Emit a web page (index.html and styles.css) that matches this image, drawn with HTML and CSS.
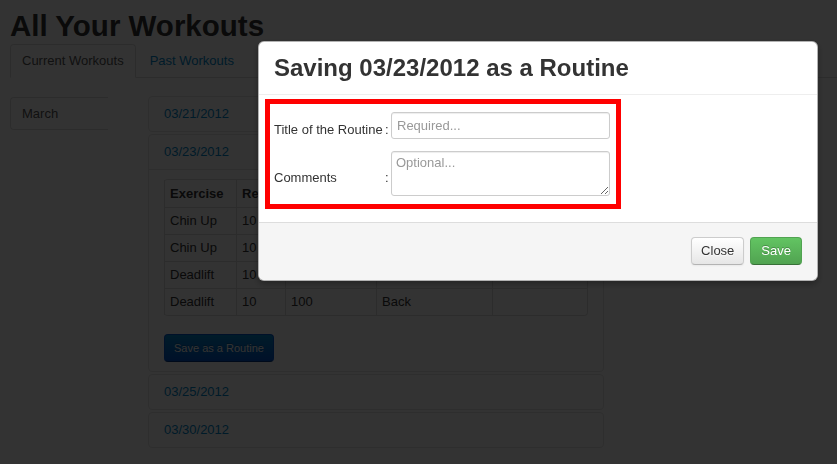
FILE: index.html
```html
<!DOCTYPE html>
<html>
<head>
<meta charset="utf-8">
<title>All Your Workouts</title>
<link rel="stylesheet" href="styles.css">
</head>
<body>
<div class="page">
  <h1 class="page-title">All Your Workouts</h1>
  <ul class="tabs">
    <li class="tab active"><a>Current Workouts</a></li>
    <li class="tab"><a>Past Workouts</a></li>
  </ul>
  <div class="layout">
    <ul class="side-nav">
      <li class="side-item"><a>March</a></li>
    </ul>
    <div class="accordion">
      <div class="group">
        <div class="group-head"><a>03/21/2012</a></div>
      </div>
      <div class="group">
        <div class="group-head"><a>03/23/2012</a></div>
        <div class="group-body">
          <table class="workout">
            <thead>
              <tr><th class="c1">Exercise</th><th class="c2">Reps</th><th class="c3">Weight</th><th class="c4">Muscle Group</th><th class="c5">Notes</th></tr>
            </thead>
            <tbody>
              <tr><td>Chin Up</td><td>10</td><td>0</td><td>Back</td><td></td></tr>
              <tr><td>Chin Up</td><td>10</td><td>0</td><td>Back</td><td></td></tr>
              <tr><td>Deadlift</td><td>10</td><td>100</td><td>Back</td><td></td></tr>
              <tr><td>Deadlift</td><td>10</td><td>100</td><td>Back</td><td></td></tr>
            </tbody>
          </table>
          <button class="btn-primary-small">Save as a Routine</button>
        </div>
      </div>
      <div class="group">
        <div class="group-head"><a>03/25/2012</a></div>
      </div>
      <div class="group">
        <div class="group-head"><a>03/30/2012</a></div>
      </div>
    </div>
  </div>
</div>

<div class="backdrop"></div>

<div class="modal">
  <div class="modal-header">
    <h3 class="modal-title">Saving 03/23/2012 as a Routine</h3>
  </div>
  <div class="modal-body">
    <div class="highlight">
      <div class="form-grid">
        <label class="f-label">Title of the Routine</label>
        <span class="f-colon">:</span>
        <input class="f-input" type="text" placeholder="Required...">
        <label class="f-label">Comments</label>
        <span class="f-colon">:</span>
        <textarea class="f-textarea" placeholder="Optional..."></textarea>
      </div>
    </div>
  </div>
  <div class="modal-footer">
    <button class="btn btn-default">Close</button>
    <button class="btn btn-success">Save</button>
  </div>
</div>
</body>
</html>
```

FILE: styles.css
```css
* { box-sizing: border-box; }

html, body {
  margin: 0;
  padding: 0;
  background: #ffffff;
}

body {
  font-family: "Liberation Sans", Arial, Helvetica, sans-serif;
  font-size: 13px;
  line-height: 18px;
  color: #333333;
  overflow: hidden;
  height: 464px;
}

a { color: #0088cc; text-decoration: none; }

.page {
  padding: 10px 0 0 10px;
}

.page-title {
  margin: 0 0 2px 0;
  font-size: 29.5px;
  line-height: 32px;
  font-weight: bold;
  color: #333333;
}

.tabs {
  list-style: none;
  margin: 0 0 18px 0;
  padding: 0;
  display: flex;
  border-bottom: 1px solid #dddddd;
}

.tab {
  margin-right: 2px;
  margin-bottom: -1px;
}

.tab a {
  display: block;
  padding: 7px 11px;
  line-height: 18px;
  border: 1px solid transparent;
  border-radius: 4px 4px 0 0;
}

.tab.active a {
  color: #555555;
  background: #ffffff;
  border-color: #dddddd;
  border-bottom-color: transparent;
}

.layout {
  display: grid;
  grid-template-columns: 98px 456px;
  column-gap: 40px;
  align-items: start;
}

.side-nav {
  list-style: none;
  margin: 1px 0 0 0;
  padding: 0;
}

.side-item a {
  display: block;
  padding: 7px 11px 6px;
  line-height: 18px;
  color: #555555;
  border: 1px solid #dddddd;
  border-right: 0;
  border-radius: 4px 0 0 4px;
}

.group {
  border: 1px solid #e5e5e5;
  border-radius: 4px;
  margin-bottom: 2px;
}

.group-head a {
  display: block;
  padding: 8px 15px;
  line-height: 18px;
}

.group-body {
  border-top: 1px solid #e5e5e5;
  padding: 9px 15px;
}

.workout {
  width: 423px;
  border-collapse: separate;
  border-spacing: 0;
  border: 1px solid #dddddd;
  border-left: 0;
  border-radius: 4px;
  margin-bottom: 18px;
  table-layout: fixed;
}

.workout th,
.workout td {
  padding: 4px 5px;
  line-height: 18px;
  text-align: left;
  border-left: 1px solid #dddddd;
  border-top: 1px solid #dddddd;
  vertical-align: top;
  white-space: nowrap;
  overflow: hidden;
}

.workout thead th { border-top: 0; padding-top: 5px; font-weight: bold; }

.workout .c1 { width: 72px; }
.workout .c2 { width: 49px; }
.workout .c3 { width: 91px; }
.workout .c4 { width: 116px; }
.workout .c5 { width: 95px; }

.btn-primary-small {
  display: block;
  font-family: inherit;
  font-size: 11px;
  line-height: 16px;
  height: 28px;
  padding: 5px 9px;
  color: #ffffff;
  text-shadow: 0 -1px 0 rgba(0,0,0,0.25);
  background: linear-gradient(#0088cc, #0055cc);
  border: 1px solid #0055cc;
  border-bottom-color: #003580;
  border-radius: 4px;
}

.backdrop {
  position: fixed;
  left: 0; top: 0; right: 0; bottom: 0;
  background: rgba(0, 0, 0, 0.8);
  z-index: 10;
}

.modal {
  position: fixed;
  left: 258px;
  top: 41px;
  width: 560px;
  z-index: 20;
  background: #ffffff;
  border: 1px solid rgba(0,0,0,0.3);
  border-radius: 6px;
  box-shadow: 0 3px 7px rgba(0,0,0,0.3);
}

.modal-header {
  height: 53px;
  padding: 9px 15px;
  border-bottom: 1px solid #eeeeee;
}

.modal-title {
  margin: 0;
  font-size: 24px;
  line-height: 34px;
  font-weight: bold;
  color: #333333;
}

.modal-body {
  height: 127px;
  padding: 4px 15px 13px 6px;
}

.highlight {
  width: 356px;
  height: 110px;
  border: 5px solid #ff0000;
  padding: 8px 0 0 4px;
}

.form-grid {
  display: grid;
  grid-template-columns: 110px 7px 219px;
  row-gap: 3px;
  align-items: center;
}

.f-label {
  color: #333333;
  white-space: nowrap;
}

.f-colon {
  text-align: left;
  padding-left: 1px;
}

.f-input,
.f-textarea {
  font-family: "Liberation Sans", Arial, Helvetica, sans-serif;
  font-size: 13px;
  line-height: 18px;
  color: #555555;
  border: 1px solid #cccccc;
  border-radius: 3px;
  box-shadow: inset 0 1px 1px rgba(0,0,0,0.075);
  background: #ffffff;
  width: 219px;
  margin: 0;
}

.f-input {
  height: 27px;
  padding: 4px 5px;
  margin-bottom: 9px;
}

.f-textarea {
  height: 45px;
  padding: 2px 4px;
  margin-bottom: 8px;
  resize: vertical;
  display: block;
}

.f-input::placeholder,
.f-textarea::placeholder { color: #999999; }

.modal-footer {
  height: 58px;
  padding: 14px 15px;
  background: #f5f5f5;
  border-top: 1px solid #dddddd;
  border-radius: 0 0 6px 6px;
  display: flex;
  justify-content: flex-end;
  gap: 6px;
}

.btn {
  font-family: inherit;
  font-size: 13px;
  line-height: 18px;
  height: 28px;
  padding: 4px 9px;
  border-radius: 4px;
  cursor: pointer;
}

.btn-default {
  color: #333333;
  text-shadow: 0 1px 1px rgba(255,255,255,0.75);
  background: linear-gradient(#ffffff, #e6e6e6);
  border: 1px solid #cccccc;
  border-bottom-color: #b3b3b3;
  box-shadow: inset 0 1px 0 rgba(255,255,255,0.2), 0 1px 2px rgba(0,0,0,0.05);
}

.btn-success {
  padding: 4px 10px;
  color: #ffffff;
  text-shadow: 0 -1px 0 rgba(0,0,0,0.25);
  background: linear-gradient(#62c462, #51a351);
  border: 1px solid #51a351;
  border-bottom-color: #387038;
}
```
